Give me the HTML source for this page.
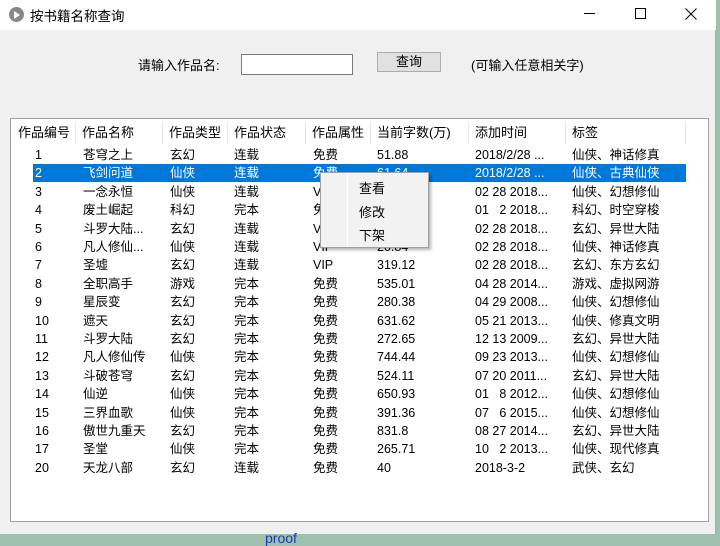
<!DOCTYPE html>
<html><head><meta charset="utf-8"><style>
*{margin:0;padding:0;box-sizing:border-box}
body{width:720px;height:538px;overflow:hidden;background:#9fc0ae;font-family:"Liberation Sans","Noto Sans CJK SC",sans-serif;font-size:12px;color:#000;position:relative}
.win{position:absolute;left:0;top:0;width:716px;height:534px;background:#f0f0f0;border-right:1px solid #aaa}
.title{position:absolute;left:0;top:0;width:716px;height:30px;background:#fff}
.abs{position:absolute;white-space:nowrap}
.list{position:absolute;left:10px;top:118px;width:699px;height:404px;background:#fff;border:1px solid #a0a0a0}
.hd{position:absolute;top:122px;height:22px;line-height:22px;font-size:13px;border-right:1px solid #e5e5e5;padding-left:6px}
.row{position:absolute;left:0;width:700px;height:18px;line-height:18px;font-size:12.5px}
.row span{position:absolute;top:0;white-space:pre}
.sel{background:#0078d7;color:#fff}
</style></head><body>
<div class="win">
<div class="title">
<div class="abs" style="left:9px;top:7px;width:15px;height:15px;border-radius:50%;background:#888"></div>
<div class="abs" style="left:14px;top:11px;width:0;height:0;border-left:6px solid #fff;border-top:4px solid transparent;border-bottom:4px solid transparent"></div>
<div class="abs" style="left:30px;top:5px;font-size:13.5px">按书籍名称查询</div>
<div class="abs" style="left:584px;top:13px;width:11px;height:1px;background:#000"></div>
<div class="abs" style="left:635px;top:8px;width:11px;height:11px;border:1px solid #000"></div>
<svg class="abs" style="left:685px;top:8px" width="12" height="12"><path d="M0.5 0.5L11.5 11.5M11.5 0.5L0.5 11.5" stroke="#000" stroke-width="1"/></svg>
</div>
<div class="abs" style="left:138px;top:55px;font-size:13px">请输入作品名:</div>
<div class="abs" style="left:241px;top:54px;width:112px;height:21px;background:#fff;border:1px solid #7a7a7a"></div>
<div class="abs" style="left:377px;top:52px;width:64px;height:20px;background:#e1e1e1;border:1px solid #adadad;text-align:center;line-height:18px;font-size:13px">查询</div>
<div class="abs" style="left:471px;top:55px;font-size:13px">(可输入任意相关字)</div>
<div class="list"></div>
<div class="hd" style="left:12px;width:64px">作品编号</div>
<div class="hd" style="left:76px;width:87px">作品名称</div>
<div class="hd" style="left:163px;width:65px">作品类型</div>
<div class="hd" style="left:228px;width:78px">作品状态</div>
<div class="hd" style="left:306px;width:65px">作品属性</div>
<div class="hd" style="left:371px;width:98px">当前字数(万)</div>
<div class="hd" style="left:469px;width:97px">添加时间</div>
<div class="hd" style="left:566px;width:120px">标签</div>
</div>

<div class="row" style="top:146px"><span style="left:35px">1</span><span style="left:83px">苍穹之上</span><span style="left:170px">玄幻</span><span style="left:234px">连载</span><span style="left:313px">免费</span><span style="left:377px">51.88</span><span style="left:475px">2018/2/28 ...</span><span style="left:572px">仙侠、神话修真</span></div>
<div class="row sel" style="top:164.4px;left:33px;width:653px"><span style="left:2px">2</span><span style="left:50px">飞剑问道</span><span style="left:137px">仙侠</span><span style="left:201px">连载</span><span style="left:280px">免费</span><span style="left:344px">61.64</span><span style="left:442px">2018/2/28 ...</span><span style="left:539px">仙侠、古典仙侠</span></div>
<div class="row" style="top:182.8px"><span style="left:35px">3</span><span style="left:83px">一念永恒</span><span style="left:170px">仙侠</span><span style="left:234px">连载</span><span style="left:313px">VIP</span><span style="left:475px">02 28 2018...</span><span style="left:572px">仙侠、幻想修仙</span></div>
<div class="row" style="top:201.2px"><span style="left:35px">4</span><span style="left:83px">废土崛起</span><span style="left:170px">科幻</span><span style="left:234px">完本</span><span style="left:313px">免费</span><span style="left:475px">01   2 2018...</span><span style="left:572px">科幻、时空穿梭</span></div>
<div class="row" style="top:219.6px"><span style="left:35px">5</span><span style="left:83px">斗罗大陆...</span><span style="left:170px">玄幻</span><span style="left:234px">连载</span><span style="left:313px">VIP</span><span style="left:475px">02 28 2018...</span><span style="left:572px">玄幻、异世大陆</span></div>
<div class="row" style="top:238px"><span style="left:35px">6</span><span style="left:83px">凡人修仙...</span><span style="left:170px">仙侠</span><span style="left:234px">连载</span><span style="left:313px">VIP</span><span style="left:377px">20.84</span><span style="left:475px">02 28 2018...</span><span style="left:572px">仙侠、神话修真</span></div>
<div class="row" style="top:256.4px"><span style="left:35px">7</span><span style="left:83px">圣墟</span><span style="left:170px">玄幻</span><span style="left:234px">连载</span><span style="left:313px">VIP</span><span style="left:377px">319.12</span><span style="left:475px">02 28 2018...</span><span style="left:572px">玄幻、东方玄幻</span></div>
<div class="row" style="top:274.8px"><span style="left:35px">8</span><span style="left:83px">全职高手</span><span style="left:170px">游戏</span><span style="left:234px">完本</span><span style="left:313px">免费</span><span style="left:377px">535.01</span><span style="left:475px">04 28 2014...</span><span style="left:572px">游戏、虚拟网游</span></div>
<div class="row" style="top:293.2px"><span style="left:35px">9</span><span style="left:83px">星辰变</span><span style="left:170px">玄幻</span><span style="left:234px">完本</span><span style="left:313px">免费</span><span style="left:377px">280.38</span><span style="left:475px">04 29 2008...</span><span style="left:572px">仙侠、幻想修仙</span></div>
<div class="row" style="top:311.6px"><span style="left:35px">10</span><span style="left:83px">遮天</span><span style="left:170px">玄幻</span><span style="left:234px">完本</span><span style="left:313px">免费</span><span style="left:377px">631.62</span><span style="left:475px">05 21 2013...</span><span style="left:572px">仙侠、修真文明</span></div>
<div class="row" style="top:330px"><span style="left:35px">11</span><span style="left:83px">斗罗大陆</span><span style="left:170px">玄幻</span><span style="left:234px">完本</span><span style="left:313px">免费</span><span style="left:377px">272.65</span><span style="left:475px">12 13 2009...</span><span style="left:572px">玄幻、异世大陆</span></div>
<div class="row" style="top:348.4px"><span style="left:35px">12</span><span style="left:83px">凡人修仙传</span><span style="left:170px">仙侠</span><span style="left:234px">完本</span><span style="left:313px">免费</span><span style="left:377px">744.44</span><span style="left:475px">09 23 2013...</span><span style="left:572px">仙侠、幻想修仙</span></div>
<div class="row" style="top:366.8px"><span style="left:35px">13</span><span style="left:83px">斗破苍穹</span><span style="left:170px">玄幻</span><span style="left:234px">完本</span><span style="left:313px">免费</span><span style="left:377px">524.11</span><span style="left:475px">07 20 2011...</span><span style="left:572px">玄幻、异世大陆</span></div>
<div class="row" style="top:385.2px"><span style="left:35px">14</span><span style="left:83px">仙逆</span><span style="left:170px">仙侠</span><span style="left:234px">完本</span><span style="left:313px">免费</span><span style="left:377px">650.93</span><span style="left:475px">01   8 2012...</span><span style="left:572px">仙侠、幻想修仙</span></div>
<div class="row" style="top:403.6px"><span style="left:35px">15</span><span style="left:83px">三界血歌</span><span style="left:170px">仙侠</span><span style="left:234px">完本</span><span style="left:313px">免费</span><span style="left:377px">391.36</span><span style="left:475px">07   6 2015...</span><span style="left:572px">仙侠、幻想修仙</span></div>
<div class="row" style="top:422px"><span style="left:35px">16</span><span style="left:83px">傲世九重天</span><span style="left:170px">玄幻</span><span style="left:234px">完本</span><span style="left:313px">免费</span><span style="left:377px">831.8</span><span style="left:475px">08 27 2014...</span><span style="left:572px">玄幻、异世大陆</span></div>
<div class="row" style="top:440.4px"><span style="left:35px">17</span><span style="left:83px">圣堂</span><span style="left:170px">仙侠</span><span style="left:234px">完本</span><span style="left:313px">免费</span><span style="left:377px">265.71</span><span style="left:475px">10   2 2013...</span><span style="left:572px">仙侠、现代修真</span></div>
<div class="row" style="top:458.8px"><span style="left:35px">20</span><span style="left:83px">天龙八部</span><span style="left:170px">玄幻</span><span style="left:234px">连载</span><span style="left:313px">免费</span><span style="left:377px">40</span><span style="left:475px">2018-3-2</span><span style="left:572px">武侠、玄幻</span></div>

<div class="abs" style="left:320px;top:172px;width:109px;height:76px;background:#f2f2f2;border:1px solid #a0a0a0;box-shadow:2px 2px 3px rgba(0,0,0,.3)">
<div class="abs" style="left:26px;top:0;width:1px;height:74px;background:#fff"></div>
<div class="abs" style="left:38px;top:5px;font-size:13px">查看</div>
<div class="abs" style="left:38px;top:29px;font-size:13px">修改</div>
<div class="abs" style="left:38px;top:52px;font-size:13px">下架</div>
</div>
<div class="abs" style="left:265px;top:531px;color:#1a3aa8;font-size:14px;line-height:14px">proof</div>
</body></html>
